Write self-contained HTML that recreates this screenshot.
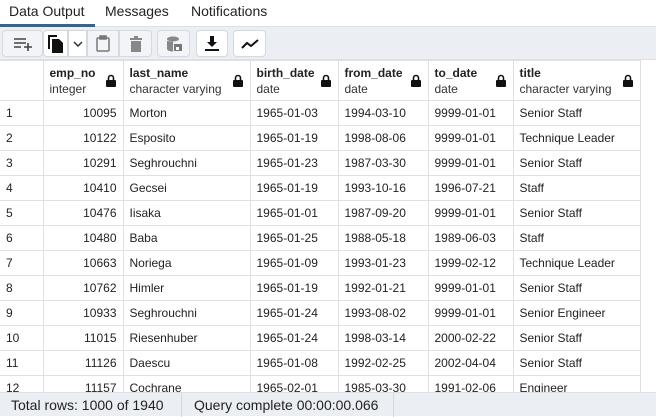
<!DOCTYPE html>
<html><head><style>
*{margin:0;padding:0;box-sizing:border-box}
body{width:656px;height:416px;overflow:hidden;background:#fff;font-family:"Liberation Sans",sans-serif;color:#222;position:relative}
.tabs{position:absolute;top:0;left:0;width:656px;height:27px;background:#fff;border-bottom:1px solid #dde0e6}
.tab{position:absolute;top:3px;font-size:14px;color:#222}
.ul{position:absolute;left:0;top:24px;width:95px;height:3px;background:#326690}
.tb{position:absolute;top:27px;left:0;width:656px;height:33px;background:#ebeef3;border-bottom:1px solid #dde0e6}
.b{position:absolute;top:3px;height:27px;border:1px solid #d4d8df;background:#f3f4f7;display:flex;align-items:center;justify-content:center}
.w{background:#fff}
table{position:absolute;top:60px;left:0;border-collapse:collapse;font-size:12px}
td{border:1px solid #dde0e6;height:25px;padding:0 6px;white-space:nowrap}
th{border:1px solid #dde0e6;height:40px;text-align:left;font-weight:normal;padding:0 6px;position:relative;vertical-align:middle}
th b{display:block;font-weight:bold;font-size:12px;color:#222}
th span{display:block;font-size:12px;color:#333;margin-top:2px}
th svg{position:absolute;right:7px;top:13px}
td.r{text-align:right}
tr td:first-child,tr th:first-child{border-left:none}
.st{position:absolute;left:0;top:392px;width:656px;height:24px;background:#ebeef3;border-top:1px solid #dde0e6;font-size:14px}
.st div{position:absolute;top:4px}
</style></head><body>
<div class="tabs"><div class="tab" style="left:9px">Data Output</div><div class="tab" style="left:105px">Messages</div><div class="tab" style="left:191px">Notifications</div><div class="ul"></div></div>
<div class="tb">
<div class="b" style="left:2px;width:41px;border-radius:4px"><svg width="20" height="14" viewBox="0 0 20 14" fill="none" stroke="#444" stroke-width="1.6"><path d="M1 2h12M1 6h12M1 10h7M11 10h8M15 6v8"/></svg></div>
<div class="b w" style="left:43px;width:25px;border-radius:4px 0 0 4px"><svg width="16" height="18" viewBox="0 0 16 18"><path d="M0 0h9v2H2v12H0z" fill="#111"/><path d="M4 4h7l4 4v10H4z" fill="#111"/></svg></div>
<div class="b w" style="left:68px;width:19px"><svg width="10" height="6"><path d="M1 1l4 4 4-4" stroke="#333" stroke-width="1.5" fill="none"/></svg></div>
<div class="b" style="left:87px;width:32px"><svg width="14" height="17" viewBox="0 0 14 17" fill="none" stroke="#777" stroke-width="1.5"><rect x="1" y="3" width="12" height="13" rx="1"/><rect x="4" y="1" width="6" height="3" fill="#777"/></svg></div>
<div class="b" style="left:119px;width:33px;border-radius:0 4px 4px 0"><svg width="12" height="16" viewBox="0 0 12 16"><path d="M0 2h12v2H0zM4 0h4v2H4zM1 5h10v11H1z" fill="#888"/></svg></div>
<div class="b" style="left:157px;width:33px;border-radius:4px"><svg width="16" height="16" viewBox="0 0 16 16"><ellipse cx="7" cy="3" rx="6" ry="2.5" fill="#888"/><path d="M1 5v8c0 1.5 3 2.5 6 2.5V5.5C4 5.5 1 5 1 5z" fill="#888"/><rect x="8" y="8" width="8" height="7" fill="#777"/><rect x="10" y="11" width="3" height="3" fill="#fff"/></svg></div>
<div class="b w" style="left:196px;width:32px;border-radius:4px"><svg width="14" height="16" viewBox="0 0 14 16"><path d="M5 0h4v6h3l-5 5-5-5h3z" fill="#111"/><rect x="0" y="13" width="14" height="2" fill="#111"/></svg></div>
<div class="b w" style="left:233px;width:33px;border-radius:4px"><svg width="18" height="10" viewBox="0 0 18 10"><path d="M1 9l5-5 4 3 7-6" stroke="#111" stroke-width="2" fill="none"/></svg></div>
</div>
<table>
<tr><th style="width:43px"></th>
<th style="width:80px"><b>emp_no</b><span>integer</span><svg width="10" height="13" viewBox="0 0 10 13"><path d="M2.5 6V4a2.5 2.5 0 015 0v2" stroke="#111" stroke-width="1.6" fill="none"/><rect x="0" y="6" width="10" height="7" rx="1" fill="#111"/></svg></th>
<th style="width:127px"><b>last_name</b><span>character varying</span><svg width="10" height="13" viewBox="0 0 10 13"><path d="M2.5 6V4a2.5 2.5 0 015 0v2" stroke="#111" stroke-width="1.6" fill="none"/><rect x="0" y="6" width="10" height="7" rx="1" fill="#111"/></svg></th>
<th style="width:88px"><b>birth_date</b><span>date</span><svg width="10" height="13" viewBox="0 0 10 13"><path d="M2.5 6V4a2.5 2.5 0 015 0v2" stroke="#111" stroke-width="1.6" fill="none"/><rect x="0" y="6" width="10" height="7" rx="1" fill="#111"/></svg></th>
<th style="width:90px"><b>from_date</b><span>date</span><svg width="10" height="13" viewBox="0 0 10 13"><path d="M2.5 6V4a2.5 2.5 0 015 0v2" stroke="#111" stroke-width="1.6" fill="none"/><rect x="0" y="6" width="10" height="7" rx="1" fill="#111"/></svg></th>
<th style="width:85px"><b>to_date</b><span>date</span><svg width="10" height="13" viewBox="0 0 10 13"><path d="M2.5 6V4a2.5 2.5 0 015 0v2" stroke="#111" stroke-width="1.6" fill="none"/><rect x="0" y="6" width="10" height="7" rx="1" fill="#111"/></svg></th>
<th style="width:127px"><b>title</b><span>character varying</span><svg width="10" height="13" viewBox="0 0 10 13"><path d="M2.5 6V4a2.5 2.5 0 015 0v2" stroke="#111" stroke-width="1.6" fill="none"/><rect x="0" y="6" width="10" height="7" rx="1" fill="#111"/></svg></th></tr>
<tr><td>1</td><td class="r">10095</td><td>Morton</td><td>1965-01-03</td><td>1994-03-10</td><td>9999-01-01</td><td>Senior Staff</td></tr>
<tr><td>2</td><td class="r">10122</td><td>Esposito</td><td>1965-01-19</td><td>1998-08-06</td><td>9999-01-01</td><td>Technique Leader</td></tr>
<tr><td>3</td><td class="r">10291</td><td>Seghrouchni</td><td>1965-01-23</td><td>1987-03-30</td><td>9999-01-01</td><td>Senior Staff</td></tr>
<tr><td>4</td><td class="r">10410</td><td>Gecsei</td><td>1965-01-19</td><td>1993-10-16</td><td>1996-07-21</td><td>Staff</td></tr>
<tr><td>5</td><td class="r">10476</td><td>Iisaka</td><td>1965-01-01</td><td>1987-09-20</td><td>9999-01-01</td><td>Senior Staff</td></tr>
<tr><td>6</td><td class="r">10480</td><td>Baba</td><td>1965-01-25</td><td>1988-05-18</td><td>1989-06-03</td><td>Staff</td></tr>
<tr><td>7</td><td class="r">10663</td><td>Noriega</td><td>1965-01-09</td><td>1993-01-23</td><td>1999-02-12</td><td>Technique Leader</td></tr>
<tr><td>8</td><td class="r">10762</td><td>Himler</td><td>1965-01-19</td><td>1992-01-21</td><td>9999-01-01</td><td>Senior Staff</td></tr>
<tr><td>9</td><td class="r">10933</td><td>Seghrouchni</td><td>1965-01-24</td><td>1993-08-02</td><td>9999-01-01</td><td>Senior Engineer</td></tr>
<tr><td>10</td><td class="r">11015</td><td>Riesenhuber</td><td>1965-01-24</td><td>1998-03-14</td><td>2000-02-22</td><td>Senior Staff</td></tr>
<tr><td>11</td><td class="r">11126</td><td>Daescu</td><td>1965-01-08</td><td>1992-02-25</td><td>2002-04-04</td><td>Senior Staff</td></tr>
<tr><td>12</td><td class="r">11157</td><td>Cochrane</td><td>1965-02-01</td><td>1985-03-30</td><td>1991-02-06</td><td>Engineer</td></tr>
</table>
<div class="st"><div style="left:11px">Total rows: 1000 of 1940</div><div style="left:181px;top:0;width:1px;height:24px;background:#d4d8df"></div><div style="left:194px">Query complete 00:00:00.066</div><div style="left:393px;top:0;width:1px;height:24px;background:#d4d8df"></div></div>
</body></html>
